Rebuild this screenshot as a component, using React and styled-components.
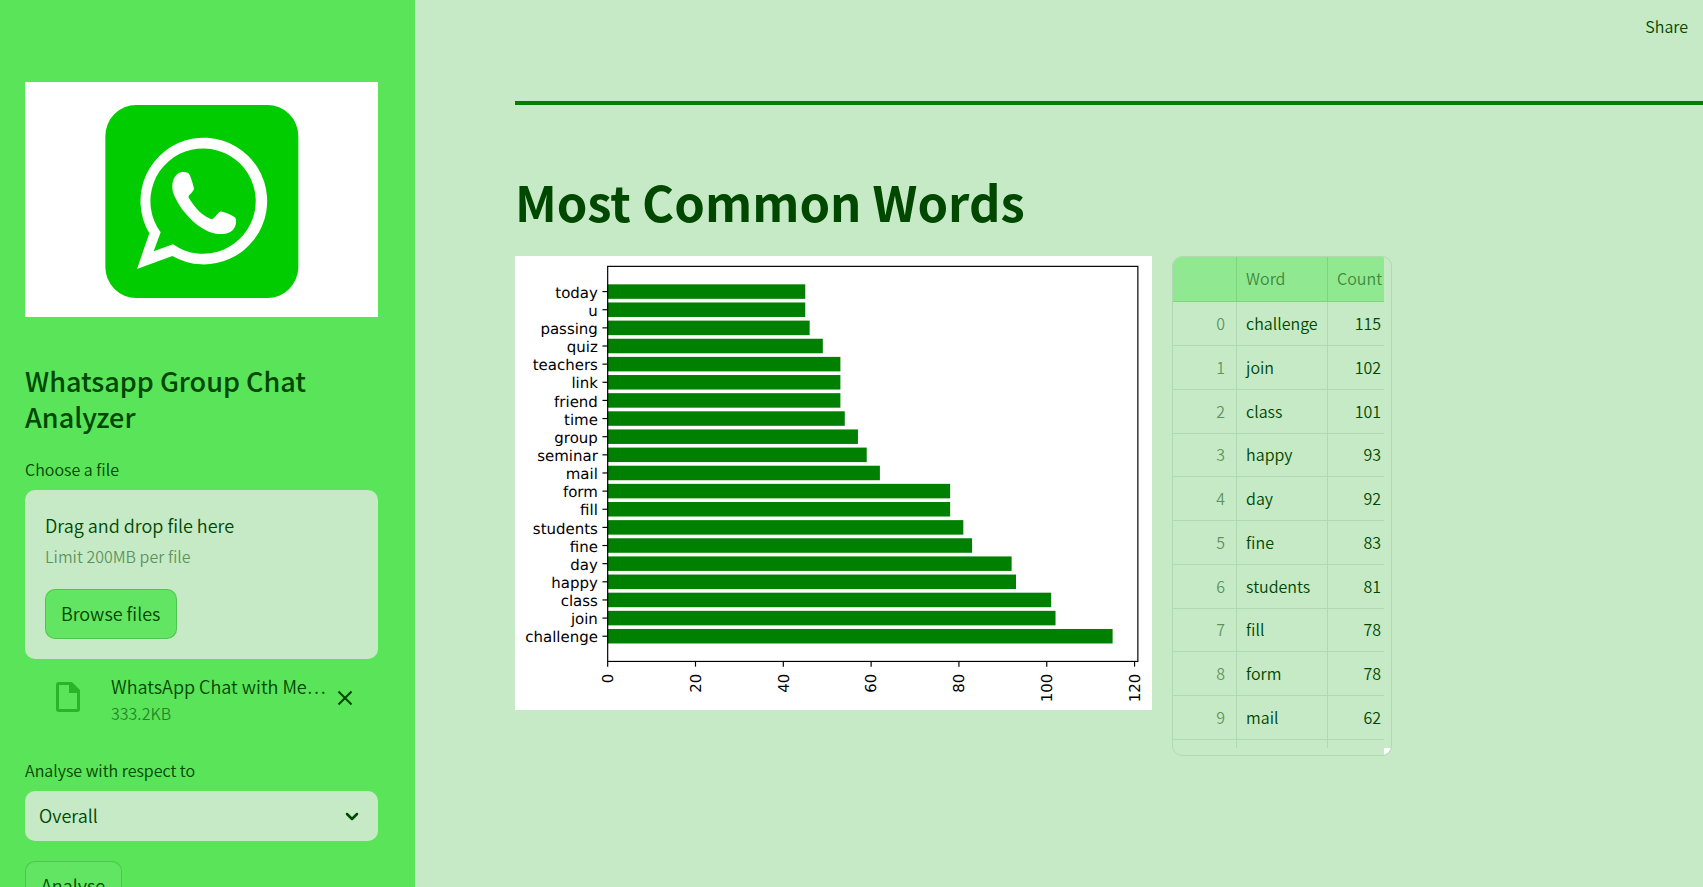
import React, { useRef } from "react";
import styled, { createGlobalStyle, ThemeProvider } from "styled-components";

const theme = {
  text: "#004700",
  textSoft: "rgba(0, 71, 0, 0.6)",
  faded: "rgba(0, 71, 0, 0.55)",
  page: "#c6eac6",
  sidebar: "#5ae45a",
  raised: "#62e562",
  header: "#90e890",
  border: "rgba(0, 71, 0, 0.2)",
  grid: "#b0d9b2",
  bar: "#008000",
};

const GlobalStyle = createGlobalStyle`
  * { box-sizing: border-box; }
  body {
    margin: 0;
    color: ${theme.text};
    background: ${theme.page};
    font-family: "Noto Sans CJK SC", "Noto Sans", sans-serif;
    font-size: 18px;
    font-weight: 350;
    line-height: 28px;
  }
  h1, h2, p { margin: 0; }
  button, select, input { font: inherit; color: inherit; }
`;

const Shell = styled.div`
  display: flex;
  height: 100vh;
  overflow: hidden;
`;

const Sidebar = styled.aside`
  flex: 0 0 415px;
  display: flex;
  flex-direction: column;
  padding: 82px 37px 0 25px;
  background: ${(p) => p.theme.sidebar};
  overflow-y: auto;
  scrollbar-width: none;
`;

const Logo = styled.svg`
  display: block;
  flex: none;
  width: 100%;
  background: #fff;
`;

const SidebarTitle = styled.h1`
  margin-top: 46px;
  font-size: 27px;
  line-height: 36px;
  font-weight: 500;
`;

const Label = styled.label`
  display: block;
  margin-top: ${(p) => p.$gap}px;
  margin-bottom: 9px;
  font-size: 16px;
  line-height: 24px;
`;

const Dropzone = styled.section`
  padding: 20px;
  border-radius: 10px;
  background: ${(p) => p.theme.page};
`;

const DropText = styled.p`
  line-height: 30px;
`;

const Hint = styled.p`
  margin: 4px 0 21px;
  font-size: 16px;
  line-height: 24px;
  color: ${(p) => p.theme.faded};
`;

const HiddenInput = styled.input`
  position: absolute;
  width: 1px;
  height: 1px;
  opacity: 0;
  overflow: hidden;
`;

const Button = styled.button`
  flex: none;
  align-self: flex-start;
  height: 50px;
  padding: 0 16px 2px 15px;
  border: 1px solid ${(p) => p.theme.border};
  border-radius: 10px;
  background: ${(p) => p.theme.raised};
  cursor: pointer;
`;

const AnalyseButton = styled(Button)`
  margin-top: 20px;
`;

const FileRow = styled.div`
  display: flex;
  align-items: center;
  margin-top: 13px;
  padding: 0 25px 0 30px;
`;

const FileIcon = styled.svg`
  flex: none;
  width: 26px;
  height: 32px;
  margin: 0 30px 3px 0;
`;

const FileMeta = styled.div`
  flex: 1;
  min-width: 0;
`;

const FileName = styled.p`
  line-height: 29px;
  white-space: nowrap;
`;

const FileSize = styled.p`
  font-size: 16px;
  line-height: 24px;
  color: ${(p) => p.theme.textSoft};
`;

const RemoveButton = styled.button`
  flex: none;
  display: flex;
  padding: 0 0 2px;
  border: 0;
  background: none;
  cursor: pointer;
`;

const SelectBox = styled.div`
  display: grid;
  align-items: center;
  height: 50px;
  flex: none;

  > * { grid-area: 1 / 1; }
  > svg { justify-self: end; margin-right: 19px; pointer-events: none; }
`;

const Select = styled.select`
  appearance: none;
  width: 100%;
  height: 50px;
  padding: 0 48px 2px 14px;
  border: 0;
  border-radius: 10px;
  background: ${(p) => p.theme.page};
`;

const Main = styled.main`
  flex: 1;
  min-width: 0;
  overflow-y: auto;
  scrollbar-width: none;
`;

const Toolbar = styled.header`
  display: flex;
  justify-content: flex-end;
  padding: 14px 15px;
`;

const ShareButton = styled.button`
  padding: 0;
  border: 0;
  background: none;
  font-size: 16px;
  line-height: 24px;
  cursor: pointer;
`;

const Content = styled.div`
  padding-left: 100px;
`;

const Divider = styled.hr`
  height: 4px;
  margin: 49px 0 63px;
  border: 0;
  background: ${(p) => p.theme.bar};
`;

const Heading = styled.h2`
  font-size: 49px;
  line-height: 66px;
  font-weight: 700;
`;

const Columns = styled.div`
  display: grid;
  grid-template-columns: 6fr 5fr;
  align-items: start;
  gap: 20px;
  margin-top: 22px;
`;

const Chart = styled.svg`
  display: block;
  width: 100%;
  background: #fff;

  text {
    font-family: "DejaVu Sans", sans-serif;
    font-size: 14px;
    font-weight: 400;
    text-anchor: end;
    text-rendering: geometricPrecision;
    fill: #000;
  }
`;

const TableFrame = styled.div`
  display: flex;
  flex-direction: column;
  width: 220px;
  height: 500px;
  border: 1px solid ${(p) => p.theme.grid};
  border-radius: 10px;
  overflow: hidden;
`;

const Table = styled.table`
  width: 211px;
  table-layout: fixed;
  border-collapse: separate;
  border-spacing: 0;
  font-size: 16px;
  line-height: 24px;
`;

const Cell = styled.td`
  height: 44px;
  padding: 0 ${(p) => (p.$last ? 3 : p.$index ? 11 : 9)}px 2px 9px;
  border-bottom: 1px solid ${(p) => p.theme.grid};
  border-right: ${(p) => (p.$last ? 0 : 1)}px solid ${(p) => p.theme.grid};
  text-align: ${(p) => (p.$last || p.$index ? "right" : "left")};
  color: ${(p) => (p.$index ? p.theme.faded : p.theme.text)};

  tr:nth-child(4n) > & { height: 43px; }
`;

const HeadCell = styled(Cell)`
  height: 45px;
  font-weight: 350;
  background: ${(p) => p.theme.header};
  border-color: #80d480;
  color: ${(p) => p.theme.textSoft};
`;

const TailCell = styled(Cell)`
  height: 8px;
  border-bottom: 0;
`;

const ScrollCorner = styled.div`
  align-self: flex-end;
  width: 7px;
  height: 8px;
  background: #fff;
`;

const words = [
  ["challenge", 115],
  ["join", 102],
  ["class", 101],
  ["happy", 93],
  ["day", 92],
  ["fine", 83],
  ["students", 81],
  ["fill", 78],
  ["form", 78],
  ["mail", 62],
  ["seminar", 59],
  ["group", 57],
  ["time", 54],
  ["friend", 53],
  ["link", 53],
  ["teachers", 53],
  ["quiz", 49],
  ["passing", 46],
  ["u", 45],
  ["today", 45],
];

const plot = { left: 86.7, top: 9.7, width: 496, height: 369.6 };

function WordChart() {
  const unit = plot.width / (115 * 1.05);
  const step = plot.height / 21.78;
  const bottom = plot.top + plot.height;
  const rowY = (i) => bottom - (i + 1.39) * step;
  return (
    <Chart viewBox="0 0 596 425" role="img" aria-label="Most common words">
      {words.map(([word, count], i) => (
        <g key={word}>
          <rect
            x={plot.left}
            y={rowY(i) - step * 0.4}
            width={count * unit}
            height={step * 0.8}
            fill={theme.bar}
          />
          <path d={`M${plot.left} ${rowY(i)}h-4.9`} stroke="#000" strokeWidth="1.1" />
          <text x={plot.left - 9.2} y={rowY(i) + 5.8}>{word}</text>
        </g>
      ))}
      {[0, 20, 40, 60, 80, 100, 120].map((n) => {
        const x = plot.left + n * unit;
        return (
          <g key={n}>
            <path d={`M${x} ${bottom}v4.9`} stroke="#000" strokeWidth="1.1" />
            <text transform={`translate(${x + 5} ${bottom + 11.5}) rotate(-90)`}>{n}</text>
          </g>
        );
      })}
      <rect
        x={plot.left}
        y={plot.top}
        width={plot.width}
        height={plot.height}
        fill="none"
        stroke="#000"
        strokeWidth="1.1"
      />
    </Chart>
  );
}

function WordTable() {
  return (
    <TableFrame>
      <Table>
        <colgroup>
          <col width="64" />
          <col width="91" />
          <col width="56" />
        </colgroup>
        <thead>
          <tr>
            <HeadCell as="th" $index />
            <HeadCell as="th" scope="col">Word</HeadCell>
            <HeadCell as="th" scope="col" $last>Count</HeadCell>
          </tr>
        </thead>
        <tbody>
          {words.slice(0, 10).map(([word, count], i) => (
            <tr key={word}>
              <Cell $index>{i}</Cell>
              <Cell>{word}</Cell>
              <Cell $last>{count}</Cell>
            </tr>
          ))}
          <tr>
            <TailCell $index />
            <TailCell />
            <TailCell $last />
          </tr>
        </tbody>
      </Table>
      <ScrollCorner />
    </TableFrame>
  );
}

function WhatsappLogo() {
  return (
    <Logo viewBox="75 66 1059 705" role="img" aria-label="WhatsApp">
      <rect x="316" y="135" width="579" height="579" rx="93" fill="#00cc00" />
      <path
        fill="#fff"
        fillRule="evenodd"
        d="M411 627L448 520A190 190 0 1 1 517 588ZM461 574L519 553A158 158 0 1 0 482 517Z"
      />
      <path
        fill="#fff"
        d="M545 336Q562 335 567 341Q575 355 582 386Q582 391 567 406C564 412 567 414 572 422C590 448 603 462 628 475Q636 479 642 474L657 457Q661 453 667 455C685 460 697 465 706 473Q709 477 708 488C706 508 692 520 668 522C640 523 612 513 577 482C545 452 528 422 519 397C513 370 520 342 545 336Z"
      />
    </Logo>
  );
}

export default function App() {
  const fileInput = useRef(null);
  return (
    <ThemeProvider theme={theme}>
      <GlobalStyle />
      <Shell>
        <Sidebar>
          <WhatsappLogo />
          <SidebarTitle>Whatsapp Group Chat Analyzer</SidebarTitle>
          <Label htmlFor="chat-file" $gap={22}>Choose a file</Label>
          <Dropzone>
            <DropText>Drag and drop file here</DropText>
            <Hint>Limit 200MB per file</Hint>
            <HiddenInput id="chat-file" type="file" tabIndex={-1} ref={fileInput} />
            <Button type="button" onClick={() => fileInput.current.click()}>Browse files</Button>
          </Dropzone>
          <FileRow>
            <FileIcon viewBox="0 0 26 32" aria-hidden="true">
              <path
                fill="#29b529"
                fillRule="evenodd"
                d="M4 1H17L25 9V28Q25 31 22 31H4Q1 31 1 28V4Q1 1 4 1ZM4 4V28H22V12H14V4Z"
              />
            </FileIcon>
            <FileMeta>
              <FileName>WhatsApp Chat with Me…</FileName>
              <FileSize>333.2KB</FileSize>
            </FileMeta>
            <RemoveButton type="button" aria-label="Remove file">
              <svg width="16" height="16" viewBox="0 0 16 16" aria-hidden="true">
                <path d="M1.5 1.5L14.5 14.5M14.5 1.5L1.5 14.5" stroke={theme.text} strokeWidth="2" />
              </svg>
            </RemoveButton>
          </FileRow>
          <Label htmlFor="subject" $gap={33}>Analyse with respect to</Label>
          <SelectBox>
            <Select id="subject" defaultValue="Overall">
              <option>Overall</option>
            </Select>
            <svg width="14" height="9" viewBox="0 0 14 9" aria-hidden="true">
              <path
                d="M2 2L7 7L12 2"
                fill="none"
                stroke={theme.text}
                strokeWidth="2.5"
                strokeLinecap="round"
                strokeLinejoin="round"
              />
            </svg>
          </SelectBox>
          <AnalyseButton type="button">Analyse</AnalyseButton>
        </Sidebar>
        <Main>
          <Toolbar>
            <ShareButton type="button">Share</ShareButton>
          </Toolbar>
          <Content>
            <Divider />
            <Heading>Most Common Words</Heading>
            <Columns>
              <WordChart />
              <WordTable />
            </Columns>
          </Content>
        </Main>
      </Shell>
    </ThemeProvider>
  );
}
